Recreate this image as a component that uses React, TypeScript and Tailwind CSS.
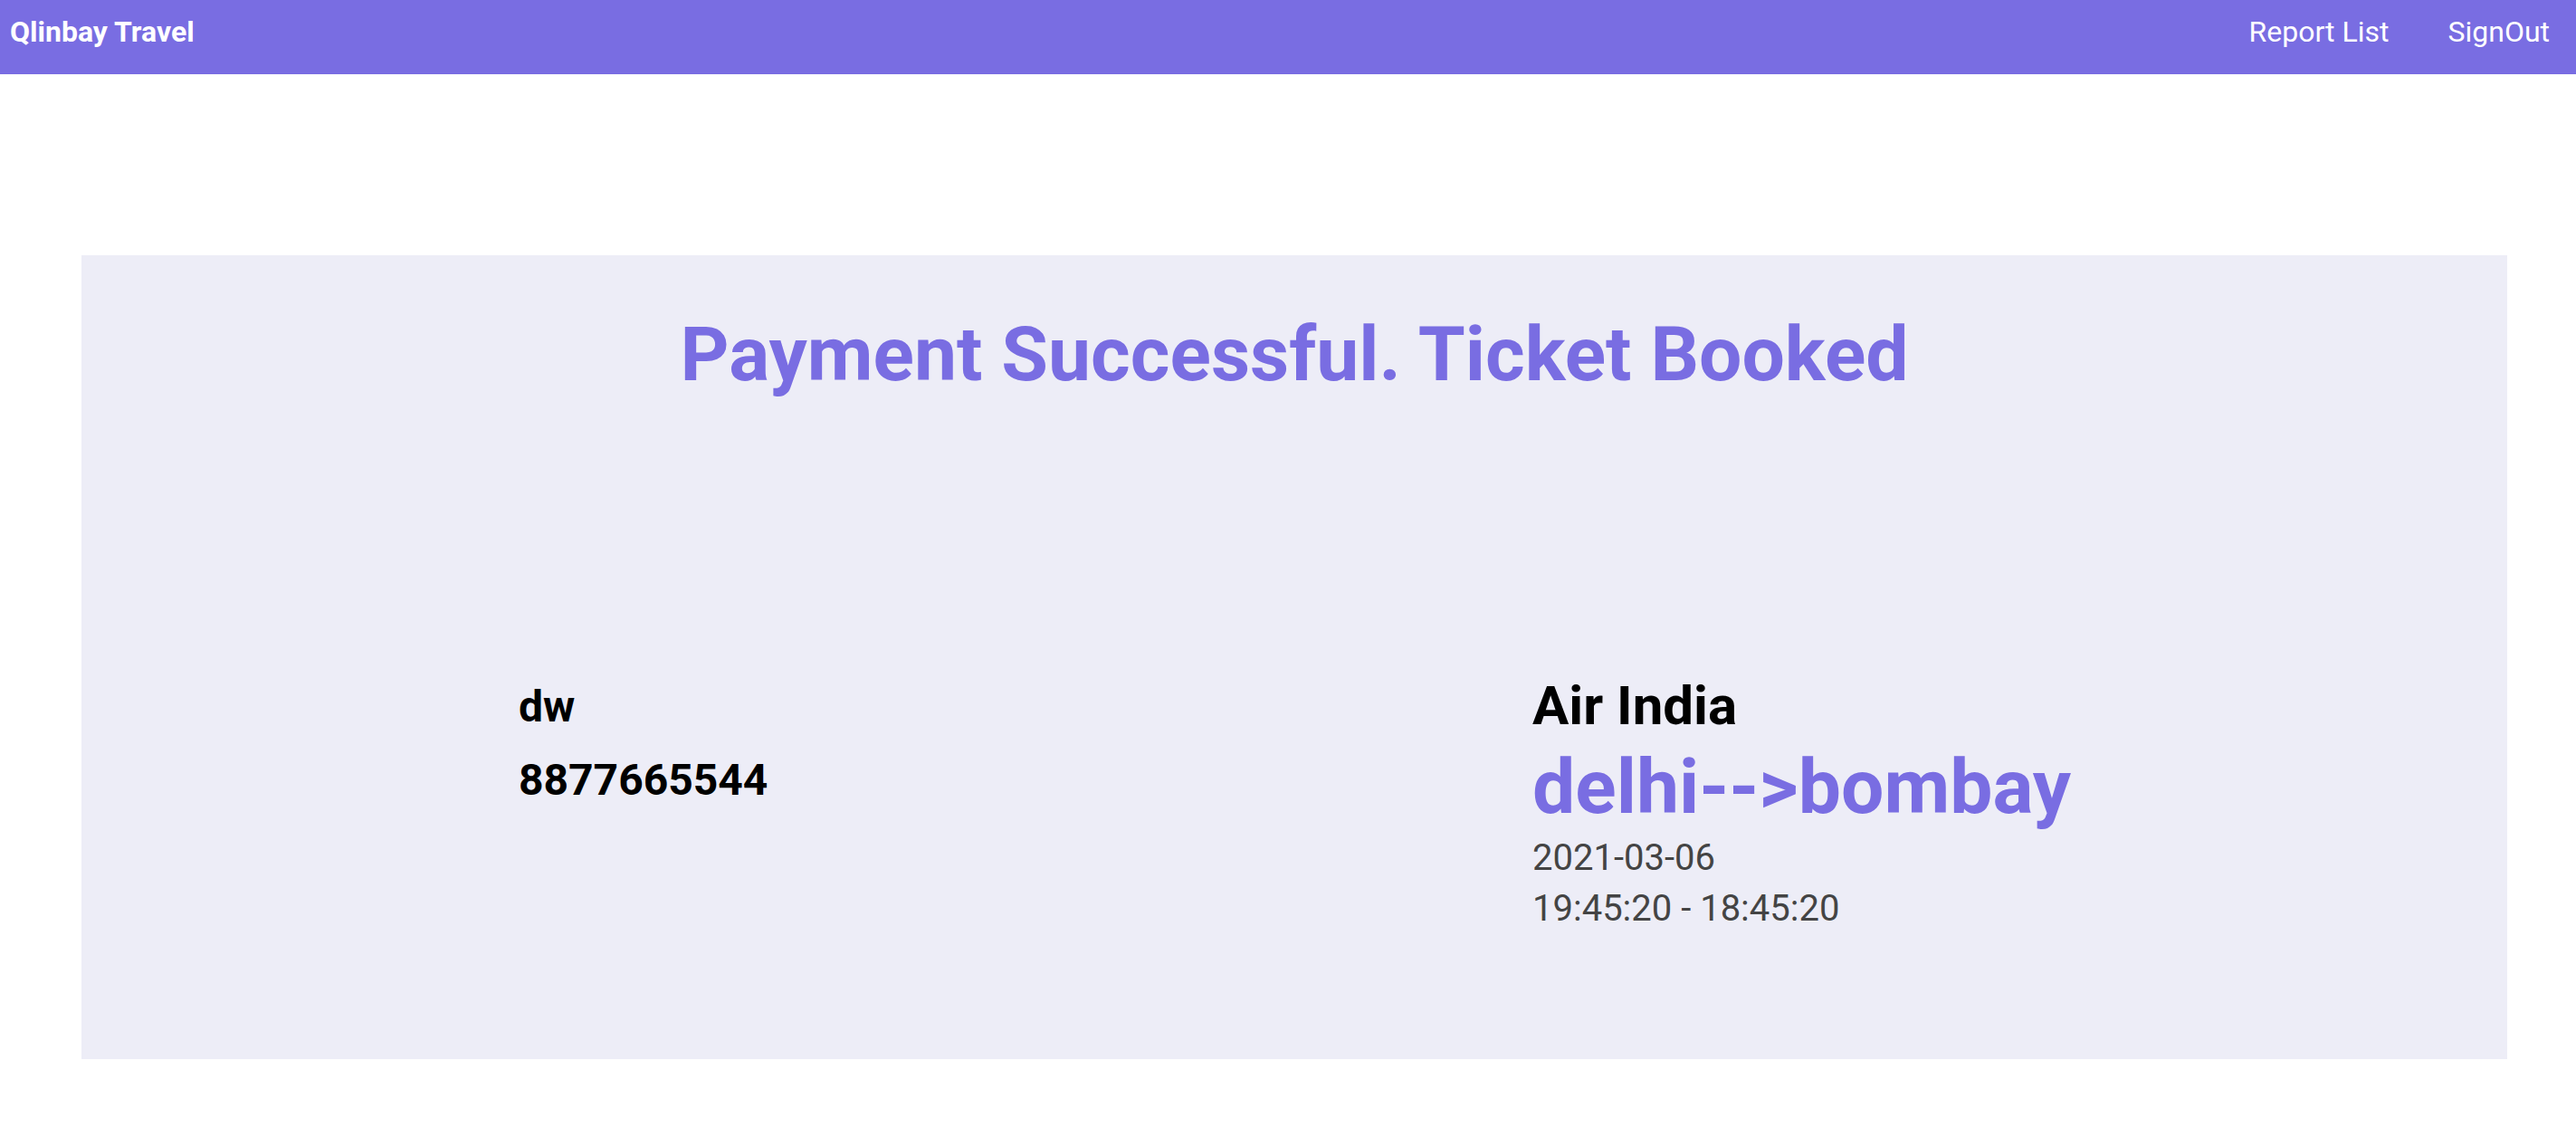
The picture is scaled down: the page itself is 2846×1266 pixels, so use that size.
import React from 'react'

const font = { fontFamily: 'Roboto, "Noto Sans", sans-serif' }

export default function App() {
  return (
    <div className="min-h-[1266px] bg-white" style={font}>
      <nav className="flex h-[82px] items-start justify-between bg-[#796de2] pl-[11px] pr-[29px] pt-[15px] text-white">
        <span className="text-[32px] font-bold leading-[40px]">Qlinbay Travel</span>
        <div className="flex gap-[65px] text-[32px] leading-[40px]">
          <a href="#">Report List</a>
          <a href="#">SignOut</a>
        </div>
      </nav>

      <main className="pl-[90px] pt-[200px]">
        <section className="h-[888px] w-[2680px] bg-[#ededf7] pt-[58px]">
          <h1 className="text-center text-[84px] font-bold leading-[103px] text-[#796de2]">
            Payment Successful. Ticket Booked
          </h1>

          <div className="mt-[302px] flex items-start">
            <div className="w-[1603px] pl-[483px] pt-[6px] text-black">
              <h3 className="text-[48px] font-bold leading-[60px]">dw</h3>
              <h3 className="mt-[21px] text-[48px] font-bold leading-[60px]">8877665544</h3>
            </div>
            <div>
              <h2 className="text-[60px] font-bold leading-[70px] text-black">Air India</h2>
              <h1 className="mt-[5px] text-[84px] font-bold leading-[100px] text-[#796de2]">delhi--&gt;bombay</h1>
              <p className="text-[40px] leading-[56px] text-[#444]">2021-03-06</p>
              <p className="text-[40px] leading-[56px] text-[#444]">19:45:20 - 18:45:20</p>
            </div>
          </div>
        </section>
      </main>
    </div>
  )
}
